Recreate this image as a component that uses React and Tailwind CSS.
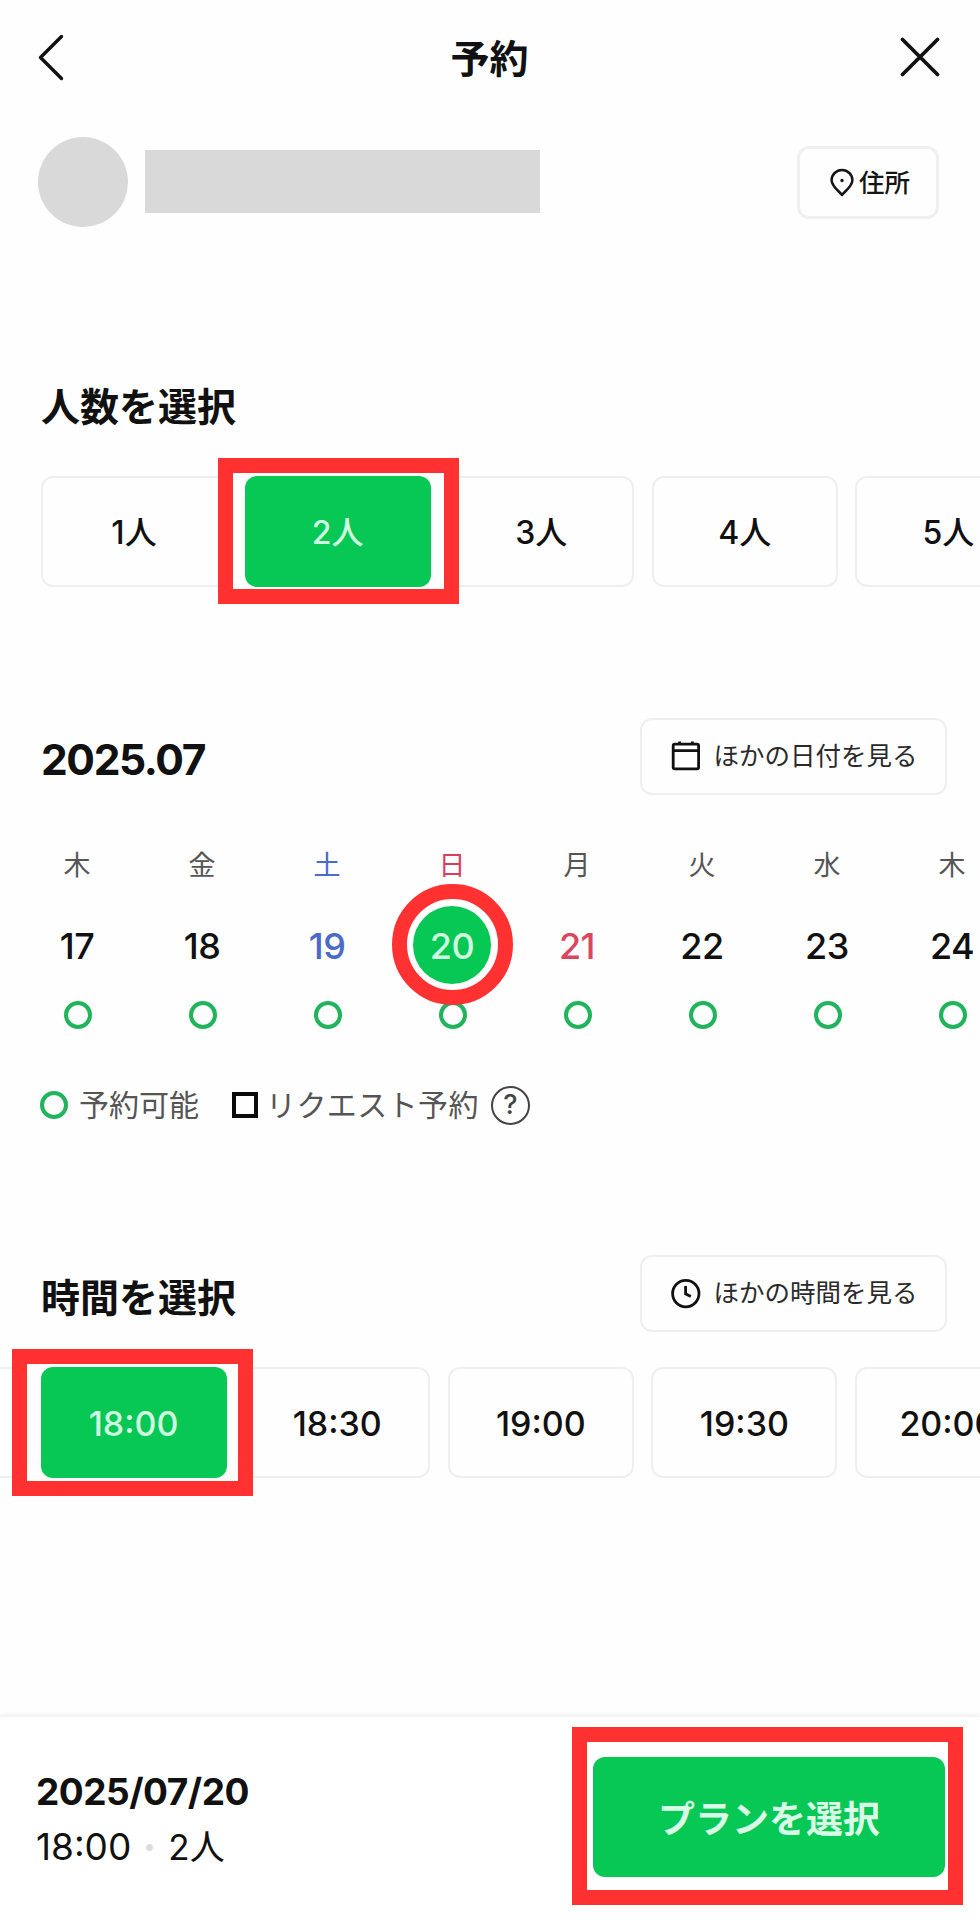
const FONT = "font-['Inter','Noto_Sans_CJK_JP',sans-serif]";

const people = ["1人", "2人", "3人", "4人", "5人"];
const times = ["", "18:00", "18:30", "19:00", "19:30", "20:00"];
const days = [
  { w: "木", d: "17" },
  { w: "金", d: "18" },
  { w: "土", d: "19", tone: "text-[#4a6bc8]" },
  { w: "日", d: "20", tone: "text-[#d9405c]", selected: true },
  { w: "月", d: "21", dTone: "text-[#dc4560]" },
  { w: "火", d: "22" },
  { w: "水", d: "23" },
  { w: "木", d: "24" },
];

function Slot({ label, selected, frame, text }) {
  return (
    <div className="relative h-[111px] w-[186px] shrink-0">
      <button
        className={
          "flex h-full w-full items-center justify-center rounded-[12px] pt-[2px] font-medium " +
          text +
          (selected ? " bg-[#07c755] text-[#d0fbe0]" : " border-2 border-[#efefef] bg-[#fefefe] text-[#111]")
        }
      >
        {label}
      </button>
      {selected && <div className={"absolute z-10 border-[15px] border-[#ff3131] " + frame} />}
    </div>
  );
}

function OutlineButton({ icon, children }) {
  return (
    <button className="flex h-[77px] w-[307px] items-center rounded-[12px] border-2 border-[#efefef] pl-[28px] text-[25.5px] text-[#2a2a2a]">
      {icon}
      <span className="ml-[12px] whitespace-nowrap">{children}</span>
    </button>
  );
}

function CalendarIcon() {
  return (
    <svg className="size-[32px]" viewBox="0 0 32 32" fill="none" stroke="#111" strokeWidth="2.8">
      <rect x="3.2" y="4.2" width="25.4" height="24.6" rx="1.6" />
      <path d="M3.2 10.6H28.6M9.6 1.4V5M22.4 1.4V5" />
    </svg>
  );
}

function ClockIcon() {
  return (
    <svg className="size-[32px]" viewBox="0 0 32 32" fill="none" stroke="#111" strokeWidth="2.8">
      <circle cx="15.8" cy="15.6" r="13.2" />
      <path d="M15.6 8.1V15.8L20.8 18.4" />
    </svg>
  );
}

export default function App() {
  return (
    <div className={"flex h-[1920px] w-[980px] flex-col overflow-hidden bg-[#fefefe] text-[#111] " + FONT}>
      <header className="flex h-[114px] items-center justify-between pr-[38px] pl-[36px]">
        <svg className="h-[50px] w-[30px]" viewBox="0 0 30 50" fill="none" stroke="#111" strokeWidth="3.4" strokeLinecap="round" strokeLinejoin="round">
          <path d="M25.5 4.5L4.5 25.5L25.5 46.5" />
        </svg>
        <h1 className="ml-[15px] pt-[3px] text-[39px] leading-none font-bold">予約</h1>
        <svg className="size-[44px]" viewBox="0 0 44 44" fill="none" stroke="#111" strokeWidth="3.8" strokeLinecap="round">
          <path d="M4.5 4.5L39.5 39.5M39.5 4.5L4.5 39.5" />
        </svg>
      </header>

      <section className="flex h-[136px] items-center pt-0 pr-[41px] pl-[38px]">
        <div className="size-[90px] rounded-full bg-[#d9d9d9]" />
        <div className="mb-[1px] ml-[17px] h-[63px] w-[395px] bg-[#d9d9d9]" />
        <button className="mt-[1px] ml-auto flex h-[73px] w-[142px] items-center rounded-[12px] border-[3px] border-[#f0f0f0] pl-[29px] text-[25.5px] font-medium text-[#151515]">
          <svg className="h-[30px] w-[26px]" viewBox="0 0 26 30" fill="none" stroke="#151515" strokeWidth="2.5" strokeLinejoin="round">
            <path d="M13 27C10.5 23.5 2.6 18.3 2.6 12.2A10.4 10.2 0 0 1 23.4 12.2C23.4 18.3 15.5 23.5 13 27Z" />
            <circle cx="13" cy="12.5" r="1" fill="#151515" stroke="#151515" strokeWidth="1.4" />
          </svg>
          <span className="ml-[4px] pt-[1px]">住所</span>
        </button>
      </section>

      <section className="pt-[127px]">
        <h2 className="flex h-[60px] items-center pl-[41px] text-[39px] font-semibold">人数を選択</h2>
        <div className="mt-[39px] flex gap-[17.6px] pl-[41px]">
          {people.map((p) => (
            <Slot key={p} label={p} selected={p === "2人"} text="text-[32px]" frame="-top-[18px] -left-[26.5px] h-[146px] w-[241px]" />
          ))}
        </div>
      </section>

      <section className="pt-[130px]">
        <div className="flex h-[78px] items-center justify-between pr-[33.5px] pl-[41px]">
          <h2 className="pt-[7px] text-[42.5px] font-bold tracking-[-1.4px]">2025.07</h2>
          <OutlineButton icon={<CalendarIcon />}>ほかの日付を見る</OutlineButton>
        </div>
        <div className="mt-[46px] flex pl-[14.5px]">
          {days.map(({ w, d, tone, dTone, selected }, i) => (
            <div key={i} className="flex w-[125px] shrink-0 flex-col items-center">
              <div className={"flex h-[50px] items-center text-[27px] " + (tone || "text-[#555]")}>{w}</div>
              <div className="relative mt-[15px] flex size-[78px] items-center justify-center">
                <span
                  className={
                    "flex size-[78px] items-center justify-center rounded-full pt-[1px] text-[36px] font-medium tracking-[-0.5px] " +
                    (selected ? "bg-[#07c755] text-[#d0fbe0]" : dTone || tone || "text-[#111]")
                  }
                >
                  {d}
                </span>
                {selected && <span className="absolute -top-[22px] -left-[21px] z-10 size-[121px] rounded-full border-[15px] border-[#ff3131]" />}
              </div>
              <div className="mt-[17px] ml-[2px] size-[28px] rounded-full border-4 border-[#22b45c]" />
            </div>
          ))}
        </div>
        <div className="mt-[56px] flex h-[40px] items-center pl-[40px] text-[30px] text-[#555]">
          <span className="size-[28px] rounded-full border-4 border-[#22b45c]" />
          <span className="ml-[11px] pt-[1px]">予約可能</span>
          <span className="ml-[33px] size-[26px] border-4 border-[#0a0a0a]" />
          <span className="ml-[8px] pt-[1px] tracking-[0.4px]">リクエスト予約</span>
          <span className="ml-[12px] flex size-[39px] items-center justify-center rounded-full border-2 border-[#444] text-[27px] font-medium text-[#444]">?</span>
        </div>
      </section>

      <section className="pt-[130px]">
        <div className="flex h-[77px] items-center justify-between pr-[33.5px] pl-[41px]">
          <h2 className="pt-[10px] text-[39px] font-semibold">時間を選択</h2>
          <OutlineButton icon={<ClockIcon />}>ほかの時間を見る</OutlineButton>
        </div>
        <div className="mt-[35px] -ml-[163px] flex gap-[17.6px]">
          {times.map((t, i) => (
            <Slot key={i} label={t} selected={t === "18:00"} text="text-[34px]" frame="-top-[18px] -left-[28.5px] h-[147px] w-[241px]" />
          ))}
        </div>
      </section>

      <footer className="mt-auto flex h-[203px] items-start justify-between bg-white pt-[40px] pr-[35px] pl-[36px] shadow-[0_-2px_5px_rgba(0,0,0,0.07)]">
        <div>
          <div className="pt-[8px] text-[37px] leading-[54px] font-bold tracking-[-0.5px]">2025/07/20</div>
          <div className="flex items-center text-[37px] leading-[56px]">
            18:00
            <span className="mr-[15px] ml-[15px] size-[7px] rounded-full bg-[#dcdcdc]" />
            <span className="text-[35px]">2人</span>
          </div>
        </div>
        <div className="relative">
          <button className="h-[120px] w-[352px] rounded-[12px] bg-[#07c755] pt-[5px] text-[37px] font-semibold text-[#d8fce6]">プランを選択</button>
          <div className="absolute -top-[30px] -left-[21px] z-10 h-[178px] w-[391px] border-[15px] border-[#ff3131]" />
        </div>
      </footer>
    </div>
  );
}
